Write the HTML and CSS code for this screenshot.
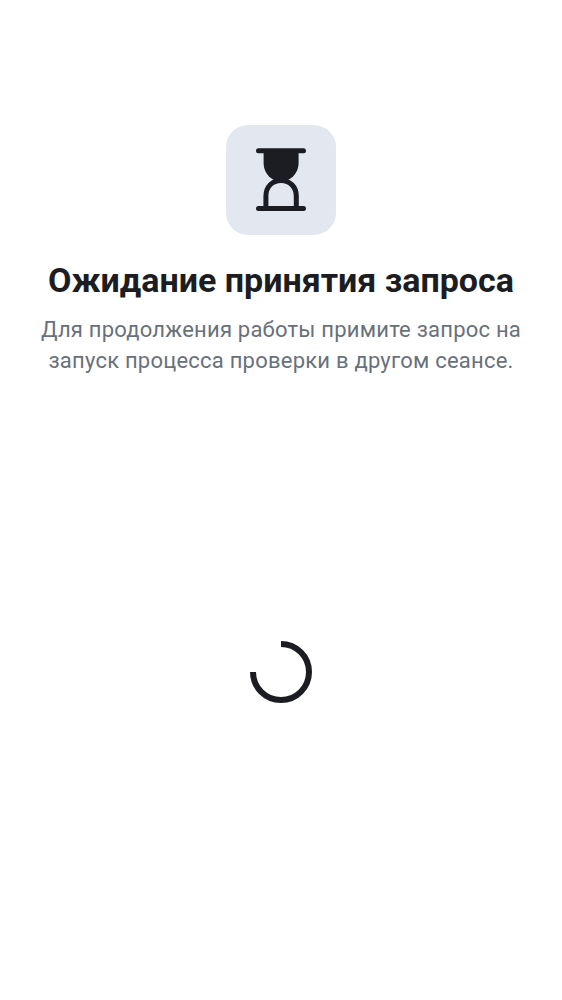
FILE: index.html
```html
<!DOCTYPE html>
<html lang="ru">
<head>
<meta charset="utf-8">
<meta name="viewport" content="width=device-width, initial-scale=1">
<title>Ожидание принятия запроса</title>
<link rel="stylesheet" href="styles.css">
</head>
<body>
<main class="screen">
  <header class="intro">
    <div class="badge">
      <svg class="hourglass" viewBox="0 0 50 64" aria-hidden="true">
        <path class="fill" d="M7.600 3H42.600V15C42.600 22 39 28 33 31.500Q25 35 17 31.500C11 28 7.600 22 7.600 15Z"/>
        <path class="line" d="M2.500 2.800H47.500M2.500 60.500H47.500M9.900 60V48C9.900 39 16 32.500 25 32.500S40.300 39 40.300 48V60"/>
      </svg>
    </div>
    <h1 class="title">Ожидание принятия запроса</h1>
    <p class="text">Для продолжения работы примите запрос на запуск процесса проверки в другом сеансе.</p>
  </header>
  <div class="status" role="status" aria-label="Загрузка">
    <svg class="spinner" viewBox="0 0 62 62" aria-hidden="true">
      <path d="M31 3A28 28 0 1 1 3 31"/>
    </svg>
  </div>
</main>
</body>
</html>
```

FILE: styles.css
```css
body {
  margin: 0;
  background: #fff;
  color: #1c1d22;
  font-family: Roboto, "Noto Sans", sans-serif;
}

.screen {
  display: flex;
  flex-direction: column;
  box-sizing: border-box;
  min-height: 100vh;
  padding: 125px 32px 32px;
}

.intro {
  display: flex;
  flex-direction: column;
  align-items: center;
  text-align: center;
}

.badge {
  display: grid;
  place-items: center;
  width: 110px;
  height: 110px;
  border-radius: 22px;
  background: #e3e7f0;
}

.hourglass {
  width: 50px;
  height: 64px;
}

.hourglass .fill {
  fill: #1c1d22;
}

.hourglass .line {
  fill: none;
  stroke: #1c1d22;
  stroke-width: 5;
  stroke-linecap: round;
}

.title {
  margin: 23px 0 12px;
  font-size: 34px;
  font-weight: 700;
  line-height: 44px;
}

.text {
  margin: 0;
  color: #68717b;
  font-size: 22px;
  line-height: 31px;
  letter-spacing: 0.01em;
}

.status {
  display: grid;
  flex: 1;
  place-items: center;
}

.spinner {
  width: 62px;
  height: 62px;
}

.spinner path {
  fill: none;
  stroke: #1c1d22;
  stroke-width: 6;
}
```
